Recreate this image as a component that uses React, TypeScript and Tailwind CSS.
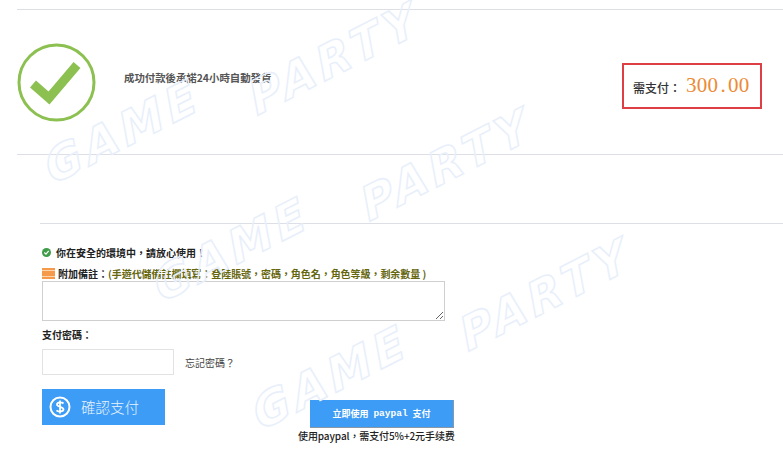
const cjk = "font-['Noto_Sans_CJK_TC',sans-serif]";

const marks = [
  { text: "GAME", cx: 123, cy: 132 },
  { text: "PARTY", cx: 335, cy: 59 },
  { text: "GAME", cx: 232, cy: 250 },
  { text: "PARTY", cx: 447, cy: 165 },
  { text: "GAME", cx: 331, cy: 378 },
  { text: "PARTY", cx: 546, cy: 295 },
];

export default function App() {
  return (
    <div className={`relative h-[453px] w-[783px] overflow-hidden bg-white ${cjk}`}>
      <div className="pt-[9px]">
        <div className="ml-[17px] flex h-[146px] items-center border-y border-[#dcdfe6] pr-[21px]">
          <svg width="80" height="80" viewBox="0 0 80 80" className="shrink-0 translate-y-[1px]">
            <circle cx="39.5" cy="39.5" r="37.5" fill="none" stroke="#8cc152" strokeWidth="3" />
            <path d="M16 41 L32 55 L60 22" fill="none" stroke="#8cc152" strokeWidth="9" />
          </svg>
          <p className="ml-[27px] -translate-y-[4px] text-[10.4px] font-semibold text-[#555]">成功付款後承諾24小時自動發貨</p>
          <div className="ml-auto flex h-[46px] w-[140px] translate-y-[4px] items-center border-2 border-[#dd3f45] pl-[9px]">
            <span className="pt-[3px] text-[12px] font-medium leading-none text-[#333]">需支付：</span>
            <span className="ml-[5px] -translate-y-[1px] font-['Liberation_Serif',serif] text-[21px] leading-none tracking-[0.3px] text-[#ec8b35]">
              300<span className="mx-[2px]">.</span>00
            </span>
          </div>
        </div>
      </div>

      <div className="ml-[40px] mt-[68px] border-t border-[#dcdfe6] pt-[21px]">
        <div className="flex h-[14px] items-center">
          <span className="ml-[2px] flex h-[9px] w-[9px] items-center justify-center rounded-full bg-[#3f9d4a]">
            <svg width="7" height="7" viewBox="0 0 8 8"><path d="M1.5 4 L3.4 5.8 L6.5 2.2" fill="none" stroke="#fff" strokeWidth="1.4" /></svg>
          </span>
          <span className="ml-[5px] text-[10px] font-semibold text-[#222]">你在安全的環境中，請放心使用！</span>
        </div>
        <div className="mt-[7px] flex h-[14px] items-center">
          <span className="ml-[2px] flex h-[11px] w-[13px] flex-col justify-between bg-[#f59a4b] py-[2px]">
            <span className="h-px bg-[#fbd5ae]" />
            <span className="h-px bg-[#fbd5ae]" />
          </span>
          <span className="ml-[3px] text-[10px] font-semibold text-[#222]">附加備註：</span>
          <span className="text-[10px] font-semibold tracking-[-0.05px] text-[#66660f]">(手遊代儲備註欄填寫：登陸賬號，密碼，角色名，角色等級，剩余數量 )</span>
        </div>
        <textarea className="ml-[2px] mt-[1px] block h-[40px] w-[403px] rounded-none border border-[#cfcfcf] bg-transparent" />
        <p className="ml-[2px] mt-[7px] text-[10px] font-semibold leading-[14px] text-[#222]">支付密碼：</p>
        <div className="mt-[7px] flex items-center">
          <input className="ml-[2px] h-[26px] w-[132px] border border-[#e2e2e2] bg-transparent" />
          <span className="ml-[11px] text-[10px] text-[#444]">忘記密碼？</span>
        </div>
        <div className="ml-[2px] mt-[14px] flex items-start">
          <div className="flex h-[36px] w-[123px] items-center bg-[#3d9cf5] pl-[7px] text-white">
            <svg width="22" height="22" viewBox="0 0 22 22">
              <circle cx="11" cy="11" r="9.5" fill="none" stroke="#fff" strokeWidth="2" />
              <path d="M14.5 7.5 C13 6 8 6 8 8.5 C8 11 14.5 10.5 14.5 13.3 C14.5 16 9 16 7.5 14.3 M11 4.5 V17.5" fill="none" stroke="#fff" strokeWidth="1.8" />
            </svg>
            <span className="ml-[10px] text-[14.5px] font-light leading-none text-[#e8f3ff]">確認支付</span>
          </div>
          <div className="ml-[133px] mt-[11px] flex w-[160px] flex-col items-start">
            <div className="ml-[12px] flex h-[28px] w-[144px] items-center justify-center whitespace-pre border-r border-b border-[#8a97a5] bg-[#3d9cf5] text-[9px] font-semibold leading-none text-white">
              <span>立即使用</span>
              <span className="mx-[5px] font-['Liberation_Mono',monospace] text-[9.5px] font-bold">paypal</span>
              <span>支付</span>
            </div>
            <p className="mt-[1px] whitespace-nowrap text-[10px] font-medium leading-[14px] tracking-[-0.1px] text-[#222]">使用paypal，需支付5%+2元手续费</p>
          </div>
        </div>
      </div>

      {marks.map((m, i) => (
        <span
          key={i}
          style={{ left: m.cx - 130, top: m.cy - 24 }}
          className="pointer-events-none absolute w-[260px] -rotate-[27deg] -skew-x-[6deg] text-center font-['DejaVu_Sans',sans-serif] text-[46px] font-bold italic leading-none tracking-[5px] text-transparent [-webkit-text-stroke:1.5px_#e8effb]"
        >
          {m.text}
        </span>
      ))}
    </div>
  );
}
